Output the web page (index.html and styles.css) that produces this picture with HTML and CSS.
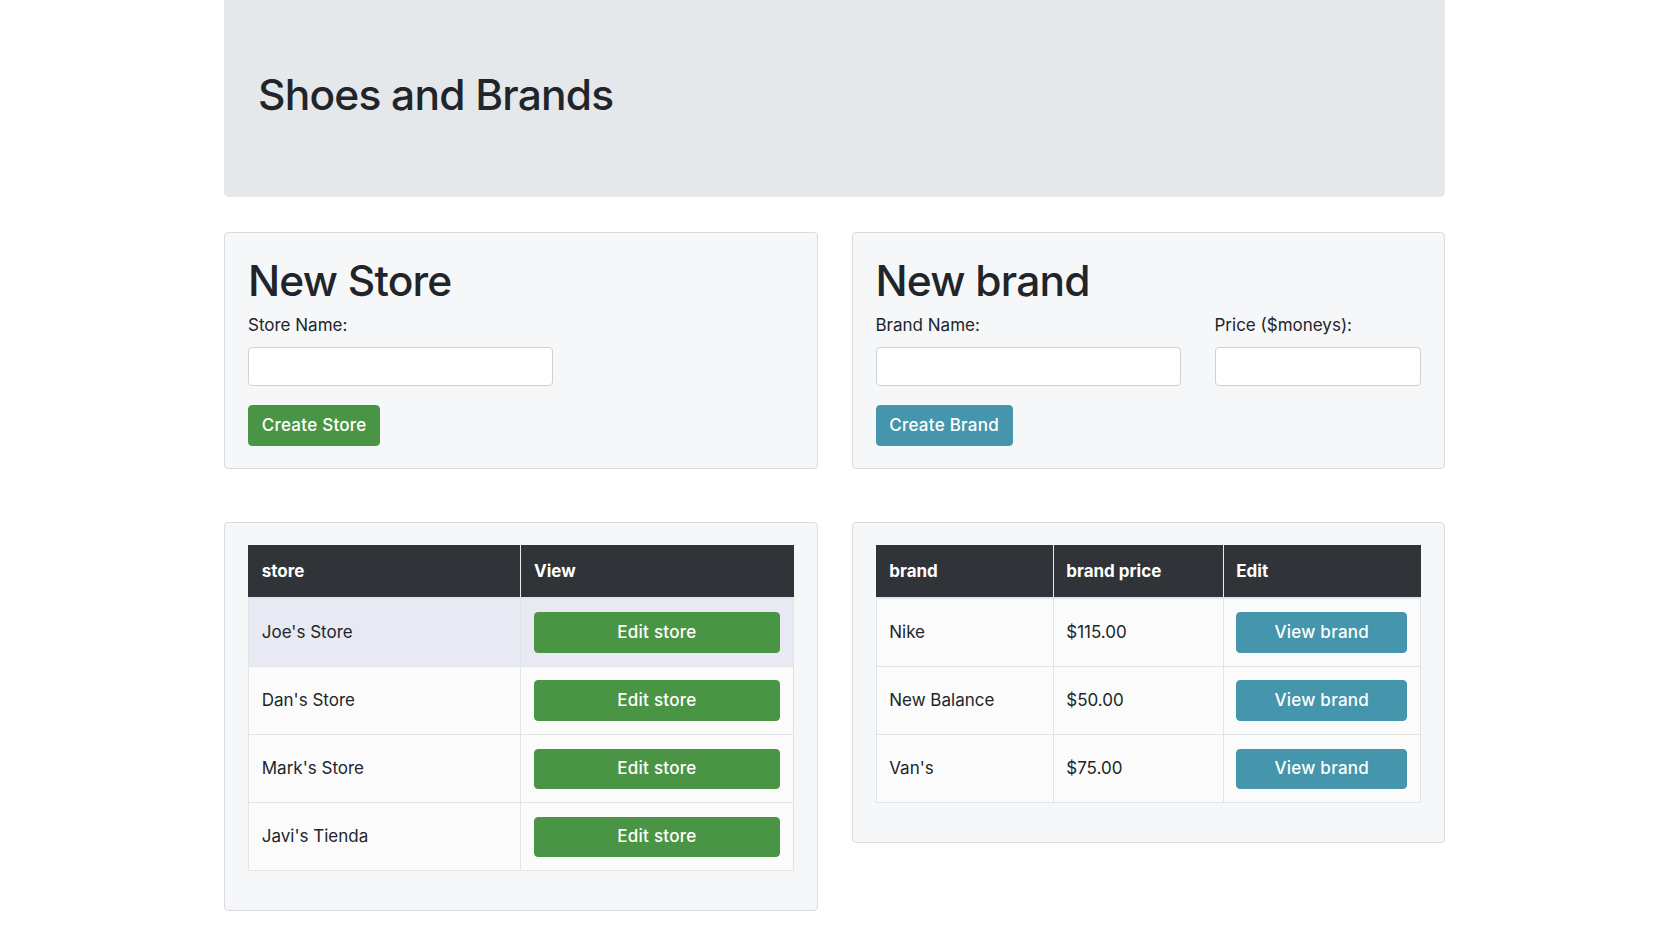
FILE: index.html
```html
<!DOCTYPE html>
<html lang="en">
<head>
<meta charset="utf-8">
<title>Shoes and Brands</title>
<link rel="stylesheet" href="styles.css">
</head>
<body>
<div class="container">
  <header class="jumbotron">
    <h1>Shoes and Brands</h1>
  </header>

  <div class="grid grid-forms">
    <section class="card">
      <h1>New Store</h1>
      <form class="form">
        <div class="form-row">
          <div class="field">
            <label>Store Name:</label>
            <input type="text" class="input">
          </div>
        </div>
        <button type="button" class="btn btn-green">Create Store</button>
      </form>
    </section>

    <section class="card">
      <h1>New brand</h1>
      <form class="form">
        <div class="form-row">
          <div class="field">
            <label>Brand Name:</label>
            <input type="text" class="input">
          </div>
          <div class="field">
            <label>Price ($moneys):</label>
            <input type="text" class="input">
          </div>
        </div>
        <button type="button" class="btn btn-teal">Create Brand</button>
      </form>
    </section>
  </div>

  <div class="grid grid-tables">
    <section class="card">
      <table class="table table-stores">
        <thead>
          <tr><th>store</th><th>View</th></tr>
        </thead>
        <tbody>
          <tr class="active"><td>Joe's Store</td><td><button type="button" class="btn btn-green btn-block">Edit store</button></td></tr>
          <tr><td>Dan's Store</td><td><button type="button" class="btn btn-green btn-block">Edit store</button></td></tr>
          <tr><td>Mark's Store</td><td><button type="button" class="btn btn-green btn-block">Edit store</button></td></tr>
          <tr><td>Javi's Tienda</td><td><button type="button" class="btn btn-green btn-block">Edit store</button></td></tr>
        </tbody>
      </table>
    </section>

    <section class="card">
      <table class="table table-brands">
        <thead>
          <tr><th class="col-brand">brand</th><th class="col-price">brand price</th><th>Edit</th></tr>
        </thead>
        <tbody>
          <tr><td>Nike</td><td>$115.00</td><td><button type="button" class="btn btn-teal btn-block">View brand</button></td></tr>
          <tr><td>New Balance</td><td>$50.00</td><td><button type="button" class="btn btn-teal btn-block">View brand</button></td></tr>
          <tr><td>Van's</td><td>$75.00</td><td><button type="button" class="btn btn-teal btn-block">View brand</button></td></tr>
        </tbody>
      </table>
    </section>
  </div>
</div>
</body>
</html>
```

FILE: styles.css
```css
* {
  box-sizing: border-box;
}

html, body {
  margin: 0;
  padding: 0;
  background: #ffffff;
}

body {
  font-family: Inter, "Liberation Sans", Arial, sans-serif;
  font-size: 17px;
  line-height: 25.5px;
  color: #212529;
}

.container {
  width: 1221px;
  margin-left: 224px;
}

h1 {
  margin: 0 0 6.5px;
  font-size: 42.5px;
  line-height: 51px;
  font-weight: 500;
  letter-spacing: -0.8px;
}

.jumbotron {
  background: #e5e8eb;
  padding: 69px 34px 69px;
  border-radius: 0 0 5px 5px;
  margin-bottom: 35px;
}

.jumbotron h1 {
  margin-bottom: 8px;
}

.grid {
  display: grid;
  grid-template-columns: 1fr 1fr;
  column-gap: 34px;
  align-items: start;
}

.grid-tables {
  margin-top: 53px;
}

.card {
  background: #f6f7f9;
  border: 1px solid #d9dbdf;
  border-radius: 4px;
  padding: 22px 23px 22px;
}

.form-row {
  display: grid;
  grid-template-columns: 305px 1fr;
  column-gap: 34px;
  margin-bottom: 19px;
}

label {
  display: block;
  margin-bottom: 9px;
}

.input {
  display: block;
  width: 100%;
  height: 39px;
  border: 1px solid #ced2d7;
  border-radius: 4px;
  background: #ffffff;
  font: inherit;
  padding: 0 12px;
}

.btn {
  display: inline-block;
  font-family: inherit;
  font-size: 17px;
  line-height: 25.5px;
  font-weight: 500;
  letter-spacing: 0.25px;
  color: #ffffff;
  border: 1px solid transparent;
  border-radius: 4px;
  padding: 6.6px 12.75px;
  cursor: pointer;
}

.btn-green {
  background: #4a9545;
  border-color: #4a9545;
}

.btn-teal {
  background: #4596ac;
  border-color: #4596ac;
}

.btn-block {
  display: block;
  width: 100%;
}

.table {
  width: 100%;
  border-collapse: collapse;
  margin-bottom: 17px;
}

.table th {
  background: #303338;
  color: #ffffff;
  font-weight: 700;
  text-align: left;
  padding: 13px 12.75px;
  border-top: 1px solid #303338;
  border-left: 1px solid #303338;
  border-right: 1px solid #e9ecef;
  border-bottom: 2px solid #e3e6e9;
}

.table th:last-child {
  border-right: 1px solid #303338;
}

.table td {
  background: #fbfbfc;
  padding: 13.2px 12.75px;
  border: 1px solid #e1e4e7;
  vertical-align: middle;
}

.table tr.active td {
  background: #e8e9f2;
}

.table-stores th:first-child {
  width: 50%;
}

.table-brands .col-brand {
  width: 177px;
}

.table-brands .col-price {
  width: 170px;
}
```
